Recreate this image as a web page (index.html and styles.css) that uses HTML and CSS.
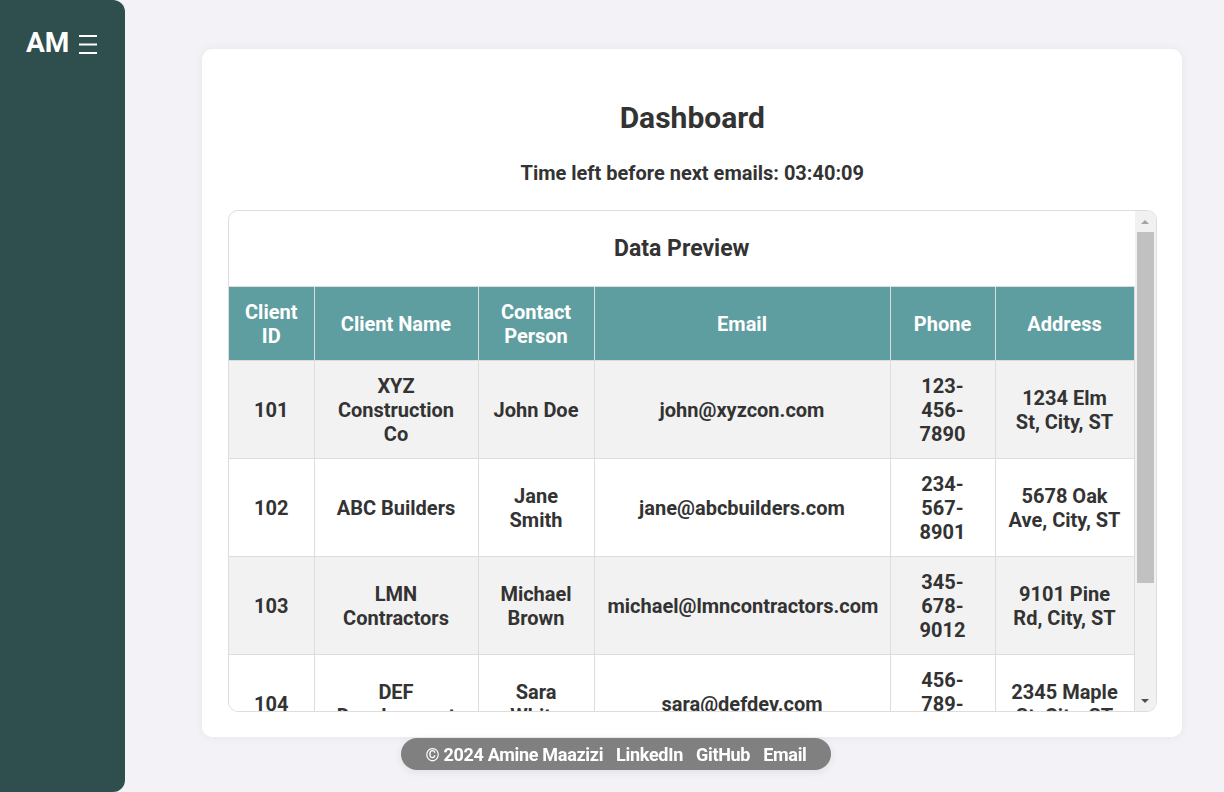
FILE: index.html
```html
<!DOCTYPE html>
<html lang="en">
<head>
<meta charset="utf-8">
<title>Dashboard</title>
<link rel="stylesheet" href="styles.css">
</head>
<body>
<div class="layout">
  <aside class="sidebar">
    <div class="brand">
      <span class="brand-name">AM</span>
      <svg class="menu-icon" width="18" height="20" viewBox="0 0 18 20" aria-hidden="true">
        <path d="M0 2h18M0 10.5h18M0 19h18" stroke="#fff" stroke-width="1.8" fill="none"/>
      </svg>
    </div>
  </aside>
  <main class="main">
    <section class="card">
      <h1 class="title">Dashboard</h1>
      <p class="timer">Time left before next emails: 03:40:09</p>
      <div class="table-wrap">
        <div class="table-scroll">
          <h2 class="table-title">Data Preview</h2>
          <table class="data-table">
            <colgroup>
              <col class="c-id"><col class="c-name"><col class="c-contact"><col class="c-email"><col class="c-phone"><col class="c-address">
            </colgroup>
            <thead>
              <tr><th>Client ID</th><th>Client Name</th><th>Contact Person</th><th>Email</th><th>Phone</th><th>Address</th></tr>
            </thead>
            <tbody>
              <tr><td>101</td><td>XYZ Construction Co</td><td>John Doe</td><td>john@xyzcon.com</td><td>123-456-7890</td><td>1234 Elm St, City, ST</td></tr>
              <tr><td>102</td><td>ABC Builders</td><td>Jane Smith</td><td>jane@abcbuilders.com</td><td>234-567-8901</td><td>5678 Oak Ave, City, ST</td></tr>
              <tr><td>103</td><td>LMN Contractors</td><td>Michael Brown</td><td>michael@lmncontractors.com</td><td>345-678-9012</td><td>9101 Pine Rd, City, ST</td></tr>
              <tr><td>104</td><td>DEF Development</td><td>Sara White</td><td>sara@defdev.com</td><td>456-789-0123</td><td>2345 Maple St, City, ST</td></tr>
              <tr><td>105</td><td>QRS Homes</td><td>Tom Green</td><td>tom@qrshomes.com</td><td>567-890-1234</td><td>6789 Cedar Ln, City, ST</td></tr>
            </tbody>
          </table>
        </div>
        <div class="scrollbar" aria-hidden="true">
          <div class="sb-button"><span class="arrow-up"></span></div>
          <div class="sb-track"><div class="sb-thumb"></div></div>
          <div class="sb-button"><span class="arrow-down"></span></div>
        </div>
      </div>
    </section>
  </main>
</div>
<footer class="footer">
  <span>© 2024 Amine Maazizi</span>
  <a href="#">LinkedIn</a>
  <a href="#">GitHub</a>
  <a href="#">Email</a>
</footer>
</body>
</html>
```

FILE: styles.css
```css
* { box-sizing: border-box; }

html, body {
  margin: 0;
  padding: 0;
  height: 100%;
}

body {
  background: #f2f2f7;
  font-family: Roboto, "Liberation Sans", Arial, sans-serif;
  color: #333;
  overflow: hidden;
}

.layout {
  display: flex;
  height: 100vh;
}

.sidebar {
  width: 125px;
  flex: none;
  background: #2f4f4f;
  border-top-right-radius: 12px;
  border-bottom-right-radius: 12px;
  padding: 27px 0 0 26px;
}

.brand {
  display: flex;
  align-items: center;
  gap: 10px;
  color: #fff;
}

.brand-name {
  font-size: 28px;
  font-weight: 700;
  line-height: 32px;
}

.menu-icon {
  display: block;
  margin-top: 1px;
}

.main {
  flex: 1;
  padding: 49px 43px 0 77px;
}

.card {
  background: #fff;
  border-radius: 10px;
  box-shadow: 0 0 10px rgba(0, 0, 0, 0.06);
  padding: 51px 25px 25px 26px;
  text-align: center;
}

.title {
  margin: 0;
  font-size: 30px;
  line-height: 36px;
  font-weight: 700;
}

.timer {
  margin: 25px 0 25px;
  font-size: 20px;
  line-height: 24px;
  font-weight: 700;
}

.table-wrap {
  height: 502px;
  display: flex;
  border: 1px solid #ddd;
  border-radius: 10px;
  background: #fff;
  overflow: hidden;
}

.table-scroll {
  flex: 1;
  min-width: 0;
  overflow: hidden;
}

.scrollbar {
  width: 21px;
  flex: none;
  display: flex;
  flex-direction: column;
  background: #f1f1f1;
}

.sb-button {
  height: 21px;
  flex: none;
  display: flex;
  align-items: center;
  justify-content: center;
}

.arrow-up {
  width: 0;
  height: 0;
  border-left: 4px solid transparent;
  border-right: 4px solid transparent;
  border-bottom: 4px solid #a3a3a3;
}

.arrow-down {
  width: 0;
  height: 0;
  border-left: 4px solid transparent;
  border-right: 4px solid transparent;
  border-top: 4px solid #505050;
}

.sb-track {
  flex: 1;
  padding: 0 2px;
}

.sb-thumb {
  height: 351px;
  background: #c1c1c1;
}

.table-title {
  margin: 0;
  padding: 24px 0;
  font-size: 23px;
  line-height: 27px;
  font-weight: 700;
}

.data-table {
  width: 100%;
  border-collapse: collapse;
  table-layout: fixed;
  font-size: 20px;
  font-weight: 700;
  line-height: 24px;
}

.c-id { width: 85px; }
.c-name { width: 164px; }
.c-contact { width: 116px; }
.c-email { width: 296px; }
.c-phone { width: 105px; }
.c-address { width: 139px; }

.data-table th,
.data-table td {
  border: 1px solid #ddd;
  padding: 12.5px 13px;
  text-align: center;
  vertical-align: middle;
}

.data-table th {
  background: #5f9ea0;
  color: #fff;
}

.data-table tr > :first-child { border-left: none; }

.data-table tbody tr:nth-child(odd) { background: #f2f2f2; }
.data-table tbody tr:nth-child(even) { background: #fff; }

.footer {
  position: fixed;
  bottom: 22px;
  left: 401px;
  width: 430px;
  height: 32px;
  display: flex;
  align-items: center;
  justify-content: center;
  gap: 13px;
  background: #808080;
  border-radius: 16px;
  box-shadow: 0 2px 8px rgba(0, 0, 0, 0.08);
  color: #fff;
  font-size: 18px;
  font-weight: 700;
  letter-spacing: -0.3px;
}

.footer a {
  color: #fff;
  text-decoration: none;
}
```
